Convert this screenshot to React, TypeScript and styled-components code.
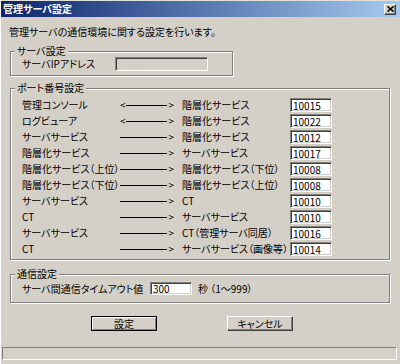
import React from "react";
import styled, { createGlobalStyle } from "styled-components";

const GlobalStyle = createGlobalStyle`
  html, body {
    margin: 0;
    padding: 0;
    background: #d4d0c8;
  }
  body {
    font-family: "Noto Sans CJK JP", "Noto Sans", sans-serif;
    font-size: 10px;
    font-feature-settings: "palt" 1;
    color: #000;
  }
`;

const Window = styled.div`
  width: 400px;
  height: 364px;
  box-sizing: border-box;
  display: flex;
  flex-direction: column;
  background: #d4d0c8;
  border-top: 1px solid #e4e1da;
  border-left: 1px solid #fff;
`;

const TitleBar = styled.div`
  height: 16px;
  display: flex;
  align-items: center;
  justify-content: space-between;
  padding: 0 4px 0 2px;
  background: linear-gradient(to right, #0a246a, #a6caf0);
  color: #fff;
  font-weight: bold;
  line-height: 16px;
`;

const CloseButton = styled.div`
  width: 12px;
  height: 11px;
  box-sizing: border-box;
  display: flex;
  align-items: center;
  justify-content: center;
  background: #d4d0c8;
  border: 1px solid;
  border-color: #fff #404040 #404040 #fff;
  box-shadow: inset -1px -1px 0 #808080;
`;

const Content = styled.div`
  flex: 1;
  display: flex;
  flex-direction: column;
  padding: 8px 10px 0 9px;
`;

const Description = styled.div`
  line-height: 14px;
  margin-left: -1px;
`;

const Group = styled.fieldset<{ $top: number; $width?: number }>`
  margin: ${(p) => p.$top}px 0 0 0;
  padding: 0;
  min-width: 0;
  box-sizing: border-box;
  width: ${(p) => (p.$width ? `${p.$width}px` : "auto")};
  border: 1px solid #808080;
  box-shadow: inset 1px 1px 0 #fff, 1px 1px 0 #fff;
`;

const Legend = styled.legend`
  margin-left: 4px;
  padding: 0 2px;
  line-height: 12px;
  background: #d4d0c8;
`;

const GroupBody = styled.div<{ $pt: number; $pb: number }>`
  padding: ${(p) => p.$pt}px 0 ${(p) => p.$pb}px 11px;
`;

const FieldRow = styled.div<{ $label: number; $h: number }>`
  display: grid;
  grid-template-columns: ${(p) => p.$label}px auto auto;
  justify-content: start;
  align-items: center;
  height: ${(p) => p.$h}px;
`;

const PortRow = styled.div`
  display: grid;
  grid-template-columns: 98px 62px 108px 42px;
  align-items: center;
  height: 16px;
`;

const Label = styled.span`
  white-space: nowrap;
  line-height: 12px;
`;

const Arrow = styled.div`
  width: 54px;
  display: flex;
  align-items: center;
  line-height: 12px;
`;

const Shaft = styled.span`
  flex: 1;
  height: 0;
  border-top: 1px solid #000;
  margin: 0 1px 0 0;
`;

const TextBox = styled.input<{ $w: number; $h: number; $disabled?: boolean }>`
  width: ${(p) => p.$w}px;
  height: ${(p) => p.$h}px;
  box-sizing: border-box;
  margin: 0;
  padding: 0 2px;
  font: inherit;
  font-size: 10px;
  line-height: 10px;
  color: #000;
  background: ${(p) => (p.$disabled ? "#d4d0c8" : "#fff")};
  border: 1px solid;
  border-color: #808080 #fff #fff #808080;
  box-shadow: inset 1px 1px 0 #404040, inset -1px -1px 0 #d4d0c8;
  outline: none;
`;

const Unit = styled.span`
  margin-left: 6px;
  white-space: nowrap;
`;

const ButtonRow = styled.div`
  display: flex;
  margin: 13px 0 0 81px;
  gap: 70px;
`;

const Button = styled.div<{ $default?: boolean }>`
  width: 66px;
  height: 15px;
  box-sizing: border-box;
  display: flex;
  align-items: center;
  justify-content: center;
  line-height: 12px;
  border: 1px solid;
  border-color: ${(p) => (p.$default ? "#000" : "#fff #404040 #404040 #fff")};
  box-shadow: ${(p) =>
    p.$default
      ? "inset 1px 1px 0 #fff, inset -1px -1px 0 #808080"
      : "inset -1px -1px 0 #808080"};
`;

const StatusBar = styled.div`
  height: 13px;
  box-sizing: border-box;
  margin: 0 3px 4px 1px;
  border: 1px solid;
  border-color: #808080 #fff #fff #808080;
`;

type Port = { from: string; to: string; both?: boolean; port: string };

const ports: Port[] = [
  { from: "管理コンソール", to: "階層化サービス", both: true, port: "10015" },
  { from: "ログビューア", to: "階層化サービス", both: true, port: "10022" },
  { from: "サーバサービス", to: "階層化サービス", port: "10012" },
  { from: "階層化サービス", to: "サーバサービス", port: "10017" },
  { from: "階層化サービス（上位）", to: "階層化サービス（下位）", port: "10008" },
  { from: "階層化サービス（下位）", to: "階層化サービス（上位）", port: "10008" },
  { from: "サーバサービス", to: "CT", port: "10010" },
  { from: "CT", to: "サーバサービス", port: "10010" },
  { from: "サーバサービス", to: "CT（管理サーバ同居）", port: "10016" },
  { from: "CT", to: "サーバサービス（画像等）", port: "10014" },
];

export default function App() {
  return (
    <>
      <GlobalStyle />
      <Window>
        <TitleBar>
          <span>管理サーバ設定</span>
          <CloseButton>
            <svg width="7" height="6" viewBox="0 0 7 6">
              <path d="M0.5 0.5 L6.5 5.5 M6.5 0.5 L0.5 5.5" stroke="#000" strokeWidth="1.6" />
            </svg>
          </CloseButton>
        </TitleBar>
        <Content>
          <Description>管理サーバの通信環境に関する設定を行います。</Description>

          <Group $top={6} $width={223}>
            <Legend>サーバ設定</Legend>
            <GroupBody $pt={0} $pb={4}>
              <FieldRow $label={93} $h={14}>
                <Label>サーバIPアドレス</Label>
                <TextBox $w={93} $h={14} $disabled readOnly defaultValue="" />
              </FieldRow>
            </GroupBody>
          </Group>

          <Group $top={6}>
            <Legend>ポート番号設定</Legend>
            <GroupBody $pt={3} $pb={2}>
              {ports.map((p, i) => (
                <PortRow key={i}>
                  <Label>{p.from}</Label>
                  <Arrow>
                    {p.both && <span>&lt;</span>}
                    <Shaft />
                    <span>&gt;</span>
                  </Arrow>
                  <Label>{p.to}</Label>
                  <TextBox $w={42} $h={14} readOnly defaultValue={p.port} />
                </PortRow>
              ))}
            </GroupBody>
          </Group>

          <Group $top={8}>
            <Legend>通信設定</Legend>
            <GroupBody $pt={1} $pb={6}>
              <FieldRow $label={128} $h={15}>
                <Label>サーバ間通信タイムアウト値</Label>
                <TextBox $w={42} $h={13} readOnly defaultValue="300" />
                <Unit>秒 （1～999）</Unit>
              </FieldRow>
            </GroupBody>
          </Group>

          <ButtonRow>
            <Button $default>設定</Button>
            <Button>キャンセル</Button>
          </ButtonRow>
        </Content>
        <StatusBar />
      </Window>
    </>
  );
}
